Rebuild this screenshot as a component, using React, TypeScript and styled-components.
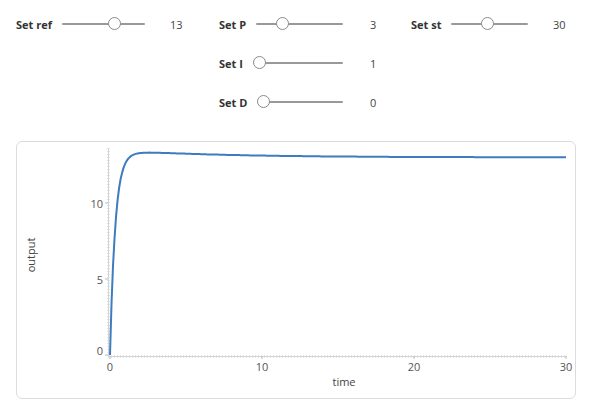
import React from "react";
import styled, { createGlobalStyle } from "styled-components";

const Global = createGlobalStyle`
  html, body { margin: 0; padding: 0; background: #fff; }
  body { font-family: "Open Sans", "Noto Sans", sans-serif; color: #333; }
`;

const Page = styled.div`
  width: 590px;
  height: 412px;
  overflow: hidden;
`;

const Controls = styled.div`
  display: grid;
  grid-template-columns: 203px 192px 1fr;
  row-gap: 19px;
  padding: 14px 0 0 16px;
`;

const Control = styled.div<{ $col: number }>`
  grid-column: ${(p) => p.$col};
  display: flex;
  align-items: center;
  height: 20px;
`;

const Main = styled.div<{ $w: number }>`
  width: ${(p) => p.$w}px;
  display: flex;
  align-items: center;
  gap: 10px;
`;

const Label = styled.span`
  font-size: 11px;
  font-weight: 700;
  color: #333;
  white-space: nowrap;
`;

const Track = styled.div`
  position: relative;
  flex: 1;
  height: 2px;
  background: #999;
  border-radius: 1px;
`;

const Thumb = styled.div`
  position: absolute;
  top: 50%;
  width: 11px;
  height: 11px;
  margin-top: -7px;
  border: 1.5px solid #8a8a8a;
  border-radius: 50%;
  background: #fff;
`;

const Value = styled.span<{ $gap: number }>`
  margin-left: ${(p) => p.$gap}px;
  font-size: 11px;
  color: #444;
`;

const Card = styled.div`
  margin: 29px 0 0 16px;
  width: 558px;
  height: 256px;
  border: 1.5px solid #dcdcdc;
  border-radius: 6px;
`;

const Chart = styled.svg`
  display: block;
  font-family: "Open Sans", "Noto Sans", sans-serif;
`;

type SliderProps = {
  label: string;
  value: string;
  frac: number;
  col: number;
  w: number;
  gap: number;
};

function Slider({ label, value, frac, col, w, gap }: SliderProps) {
  return (
    <Control $col={col}>
      <Main $w={w}>
        <Label>{label}</Label>
        <Track>
          <Thumb style={{ left: `calc(${frac} * (100% - 14px))` }} />
        </Track>
      </Main>
      <Value $gap={gap}>{value}</Value>
    </Control>
  );
}

const X0 = 93;
const Y0 = 213;
const S = 15.2;

function curvePath() {
  const pts: string[] = [];
  for (let i = 0; i <= 300; i++) {
    const t = i * 0.1;
    const a = 13 + 0.5 * Math.exp(-t / 7);
    const v = a * (1 - Math.exp(-t / 0.33)) - 0.7 * Math.exp(-t / 0.8) * (1 - Math.exp(-t / 0.3));
    pts.push(`${(X0 + t * S).toFixed(1)},${(Y0 - v * S).toFixed(1)}`);
  }
  return "M" + pts.join(" L");
}

export default function App() {
  const xt = [0, 10, 20, 30];
  const yt = [0, 5, 10];
  return (
    <Page>
      <Global />
      <Controls>
        <Slider label="Set ref" value="13" frac={0.667} col={1} w={129} gap={25} />
        <Slider label="Set P" value="3" frac={0.27} col={2} w={124} gap={27} />
        <Slider label="Set st" value="30" frac={0.48} col={3} w={117} gap={25} />
        <Slider label="Set I" value="1" frac={0} col={2} w={124} gap={27} />
        <Slider label="Set D" value="0" frac={0} col={2} w={124} gap={27} />
      </Controls>
      <Card>
        <Chart width={558} height={256} viewBox="0 0 558 256">
          <line x1={91.5} y1={6} x2={91.5} y2={214} stroke="#e4e4e4" strokeWidth={3} strokeDasharray="1 2" />
          <line x1={91.5} y1={6} x2={91.5} y2={214} stroke="#d4d4d4" strokeWidth={1} />
          <line x1={91} y1={214.5} x2={550} y2={214.5} stroke="#e4e4e4" strokeWidth={3} strokeDasharray="1 2" />
          <line x1={91} y1={214.5} x2={550} y2={214.5} stroke="#d4d4d4" strokeWidth={1} />
          {yt.map((v) => (
            <g key={"y" + v}>
              <line x1={88} x2={91} y1={Y0 - v * S} y2={Y0 - v * S} stroke="#bbb" />
              <text
                x={86}
                y={v === 0 ? Y0 - 5 : Y0 - v * S}
                textAnchor="end"
                dominantBaseline="central"
                fontSize={11}
                fill="#555"
              >
                {v}
              </text>
            </g>
          ))}
          {xt.map((v) => (
            <g key={"x" + v}>
              <line x1={X0 + v * S} x2={X0 + v * S} y1={214} y2={217} stroke="#bbb" />
              <text
                x={X0 + v * S}
                y={224.5}
                textAnchor="middle"
                dominantBaseline="central"
                fontSize={11}
                fill="#555"
              >
                {v}
              </text>
            </g>
          ))}
          <text x={327} y={239.5} textAnchor="middle" dominantBaseline="central" fontSize={11} fill="#444">
            time
          </text>
          <text
            x={13}
            y={113}
            textAnchor="middle"
            dominantBaseline="central"
            fontSize={11}
            fill="#444"
            transform="rotate(-90 13 113)"
          >
            output
          </text>
          <path d={curvePath()} fill="none" stroke="#3d7dbf" strokeWidth={2} strokeLinejoin="round" />
        </Chart>
      </Card>
    </Page>
  );
}
